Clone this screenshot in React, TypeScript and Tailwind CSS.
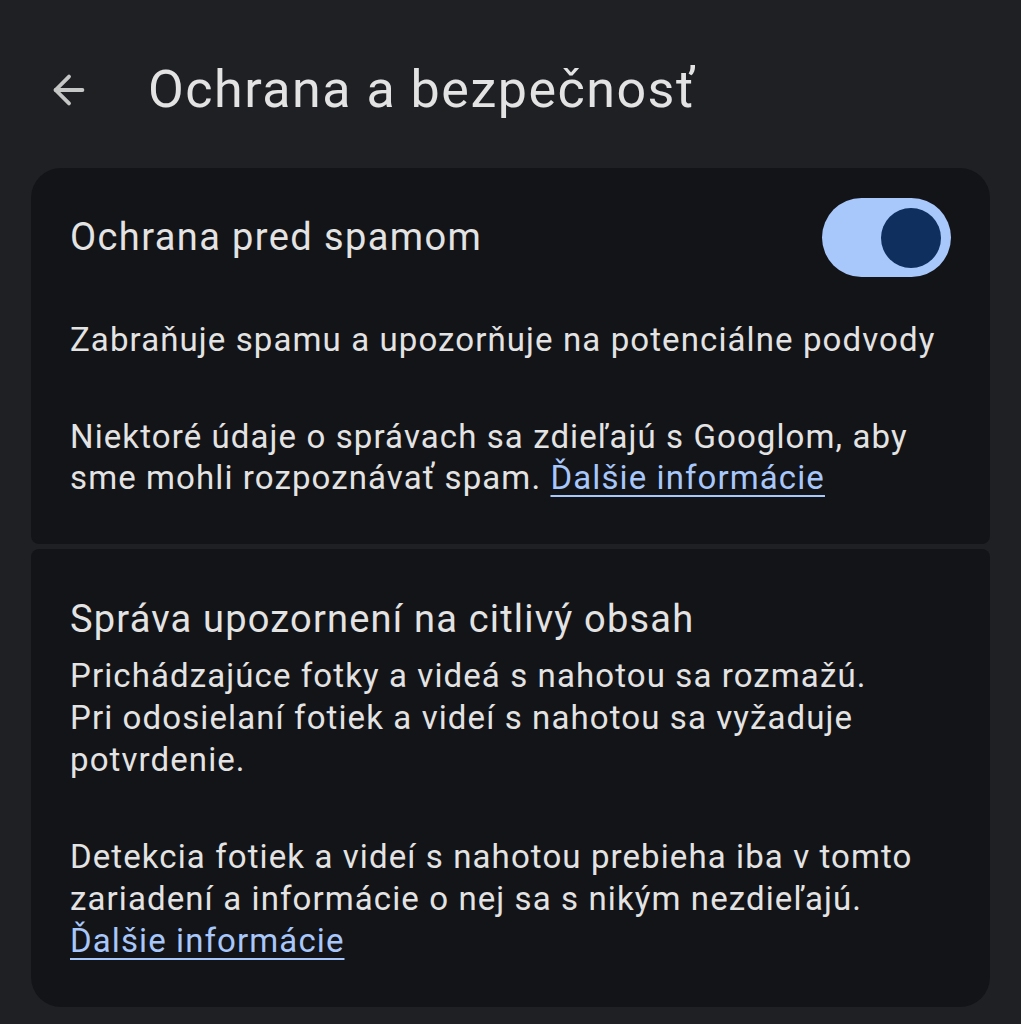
import { ArrowLeft } from "lucide-react";

function Toggle() {
  return (
    <div className="flex h-[79px] w-[129px] shrink-0 items-center justify-end rounded-full bg-[#a8c7fa] pr-[10px]">
      <div className="h-[60px] w-[60px] rounded-full bg-[#0f2f5e]" />
    </div>
  );
}

function Link({ children }: { children: string }) {
  return <span className="text-[#a8c7fa] underline decoration-[2px] underline-offset-[6px]">{children}</span>;
}

export default function App() {
  return (
    <div
      className="min-h-[1024px] w-full bg-[#1f2024] text-[#e3e3e3]"
      style={{ fontFamily: "Roboto, 'Open Sans', sans-serif" }}
    >
      <header className="flex h-[168px] items-center pl-[46px] pt-[12px]">
        <ArrowLeft className="h-[46px] w-[46px] text-[#c4c7c5]" strokeWidth={2} />
        <h1 className="ml-[56px] text-[52px] leading-none tracking-[1.5px] text-[#e3e3e3]">Ochrana a bezpečnosť</h1>
      </header>

      <div className="mx-[31px] flex flex-col gap-[5px]">
        <section className="rounded-t-[30px] rounded-b-[8px] bg-[#131418] pb-[46px] pl-[39px] pr-[39px] pt-[30px]">
          <div className="flex items-center justify-between">
            <div className="text-[38px] tracking-[1.4px]">Ochrana pred spamom</div>
            <Toggle />
          </div>
          <p className="mt-[42px] text-[33px] leading-[41px] tracking-[1.1px]">
            Zabraňuje spamu a upozorňuje na potenciálne podvody
          </p>
          <p className="mt-[56px] text-[33px] leading-[41px] tracking-[1.1px]">
            Niektoré údaje o správach sa zdieľajú s Googlom, aby
            <br />
            sme mohli rozpoznávať spam. <Link>Ďalšie informácie</Link>
          </p>
        </section>

        <section className="rounded-b-[30px] rounded-t-[8px] bg-[#131418] pb-[45px] pl-[39px] pr-[39px] pt-[48px]">
          <div className="text-[38px] leading-[44px] tracking-[1.2px]">Správa upozornení na citlivý obsah</div>
          <p className="mt-[14px] text-[33px] leading-[42px] tracking-[1.1px]">
            Prichádzajúce fotky a videá s nahotou sa rozmažú.
            <br />
            Pri odosielaní fotiek a videí s nahotou sa vyžaduje
            <br />
            potvrdenie.
          </p>
          <p className="mt-[55px] text-[33px] leading-[42px] tracking-[1.1px]">
            Detekcia fotiek a videí s nahotou prebieha iba v tomto
            <br />
            zariadení a informácie o nej sa s nikým nezdieľajú.
            <br />
            <Link>Ďalšie informácie</Link>
          </p>
        </section>
      </div>
    </div>
  );
}
